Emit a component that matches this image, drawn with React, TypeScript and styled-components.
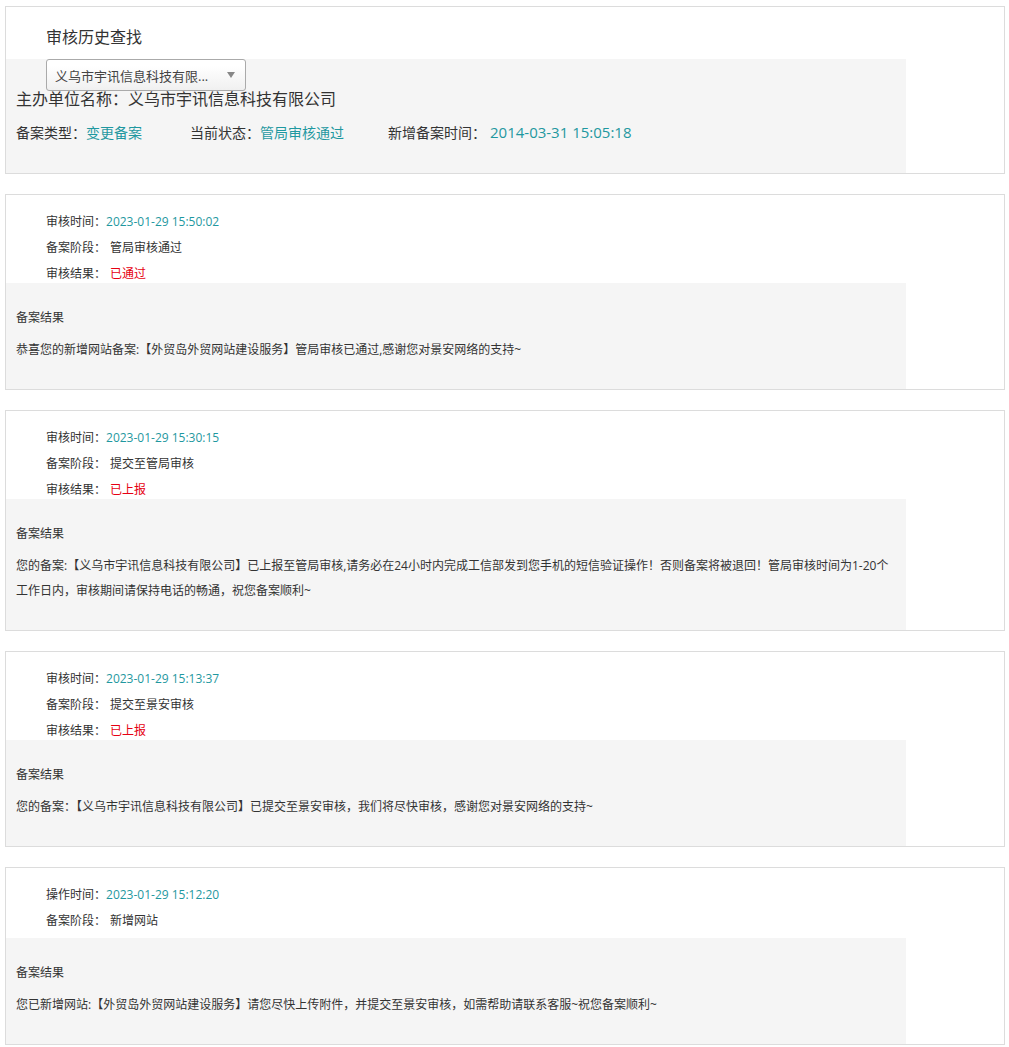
import * as React from 'react'
import styled, { createGlobalStyle } from 'styled-components'

//=================================/
const GlobalStyle = createGlobalStyle`
    html, body {
        margin: 0;
        padding: 0;
        background: #fff;
    }
    body {
        font-family: "Open Sans", "Noto Sans CJK SC", sans-serif;
        color: #333;
    }
`;

const TEAL = '#1f98a0';
const RED = '#e60012';
//=================================/

//=================================/
const Page = styled.div`
    padding: 6px 5px;
    display: flex;
    flex-direction: column;
    gap: 20px;
`;

const Card = styled.div`
    width: 1000px;
    box-sizing: border-box;
    border: 1px solid #dcdcdc;
    background: #fff;
`;

const Header = styled.div`
    height: 52px;
    box-sizing: border-box;
    padding: 19px 0 0 40px;
    font-size: 16px;
    line-height: 22px;
    color: #333;
`;

const GrayPanel = styled.div`
    width: 900px;
    box-sizing: border-box;
    background: #f5f5f5;
    padding: ${props => props.$pad};
`;

const Select = styled.div`
    width: 200px;
    height: 32px;
    margin-left: 30px;
    box-sizing: border-box;
    border: 1px solid #aaa;
    border-radius: 3px;
    background: linear-gradient(#ffffff 20%, #f0f0f0 100%);
    display: flex;
    align-items: center;
    justify-content: space-between;
    padding: 0 10px 0 8px;
    font-size: 13px;
    color: #444;
`;

const Caret = styled.span`
    width: 0;
    height: 0;
    border-left: 4px solid transparent;
    border-right: 4px solid transparent;
    border-top: 6px solid #888;
`;

const CompanyName = styled.div`
    font-size: 16px;
    line-height: 20px;
    color: #333;
    margin-top: -2px;
`;

const MetaRow = styled.div`
    display: flex;
    align-items: center;
    margin-top: 13px;
    font-size: 14px;
    line-height: 20px;
    color: #333;
`;

const MetaItem = styled.span`
    margin-right: ${props => props.$gap || '0'};
`;

const Value = styled.span`
    color: ${props => props.color};
    font-size: ${props => props.$size || 'inherit'};
    margin-left: ${props => props.$indent || '0'};
`;

const InfoRows = styled.div`
    max-height: 88px;
    box-sizing: border-box;
    overflow: hidden;
    padding: 14px 0 4px 40px;
`;

const InfoRow = styled.div`
    font-size: 12px;
    line-height: 26px;
    color: #333;
`;

const ResultTitle = styled.div`
    font-size: 12px;
    line-height: 25px;
    color: #333;
`;

const ResultText = styled.div`
    margin-top: 7px;
    font-size: 12px;
    line-height: 25px;
    color: #333;
`;
//=================================/

type Row = { label: string; value: string; color?: string; indent?: string };

interface IRecord {
    rows: Row[];
    text: React.ReactNode;
}

const records: IRecord[] = [
    {
        rows: [
            { label: '审核时间：', value: '2023-01-29 15:50:02', color: TEAL },
            { label: '备案阶段：', value: '管局审核通过', indent: '4px' },
            { label: '审核结果：', value: '已通过', color: RED, indent: '4px' },
        ],
        text: '恭喜您的新增网站备案:【外贸岛外贸网站建设服务】管局审核已通过,感谢您对景安网络的支持~',
    },
    {
        rows: [
            { label: '审核时间：', value: '2023-01-29 15:30:15', color: TEAL },
            { label: '备案阶段：', value: '提交至管局审核', indent: '4px' },
            { label: '审核结果：', value: '已上报', color: RED, indent: '4px' },
        ],
        text: <>您的备案:【义乌市宇讯信息科技有限公司】已上报至管局审核,请务必在24小时内完成工信部发到您手机的短信验证操作！否则备案将被退回！管局审核时间为1-20个<br />工作日内，审核期间请保持电话的畅通，祝您备案顺利~</>,
    },
    {
        rows: [
            { label: '审核时间：', value: '2023-01-29 15:13:37', color: TEAL },
            { label: '备案阶段：', value: '提交至景安审核', indent: '4px' },
            { label: '审核结果：', value: '已上报', color: RED, indent: '4px' },
        ],
        text: '您的备案：【义乌市宇讯信息科技有限公司】已提交至景安审核，我们将尽快审核，感谢您对景安网络的支持~',
    },
    {
        rows: [
            { label: '操作时间：', value: '2023-01-29 15:12:20', color: TEAL },
            { label: '备案阶段：', value: '新增网站', indent: '4px' },
        ],
        text: '您已新增网站:【外贸岛外贸网站建设服务】请您尽快上传附件，并提交至景安审核，如需帮助请联系客服~祝您备案顺利~',
    },
];

//=====================================================================================//
export default function App() {
    return (
        <Page>
            <GlobalStyle />

            <Card>
                <Header>审核历史查找</Header>
                <GrayPanel $pad="0 10px 30px">
                    <Select>
                        <span>义乌市宇讯信息科技有限...</span>
                        <Caret />
                    </Select>
                    <CompanyName>主办单位名称：义乌市宇讯信息科技有限公司</CompanyName>
                    <MetaRow>
                        <MetaItem $gap="48px">
                            备案类型：<Value color={TEAL}>变更备案</Value>
                        </MetaItem>
                        <MetaItem $gap="44px">
                            当前状态：<Value color={TEAL}>管局审核通过</Value>
                        </MetaItem>
                        <MetaItem>
                            新增备案时间：<Value color={TEAL} $size="15px" $indent="4px">2014-03-31 15:05:18</Value>
                        </MetaItem>
                    </MetaRow>
                </GrayPanel>
            </Card>

            {records.map((rec, i) => (
                <Card key={i}>
                    <InfoRows>
                        {rec.rows.map((r, j) => (
                            <InfoRow key={j}>
                                {r.label}
                                <Value color={r.color || '#333'} $indent={r.indent}>{r.value}</Value>
                            </InfoRow>
                        ))}
                    </InfoRows>
                    <GrayPanel $pad="22px 10px 27px">
                        <ResultTitle>备案结果</ResultTitle>
                        <ResultText>{rec.text}</ResultText>
                    </GrayPanel>
                </Card>
            ))}
        </Page>
    );
}
//=====================================================================================//
